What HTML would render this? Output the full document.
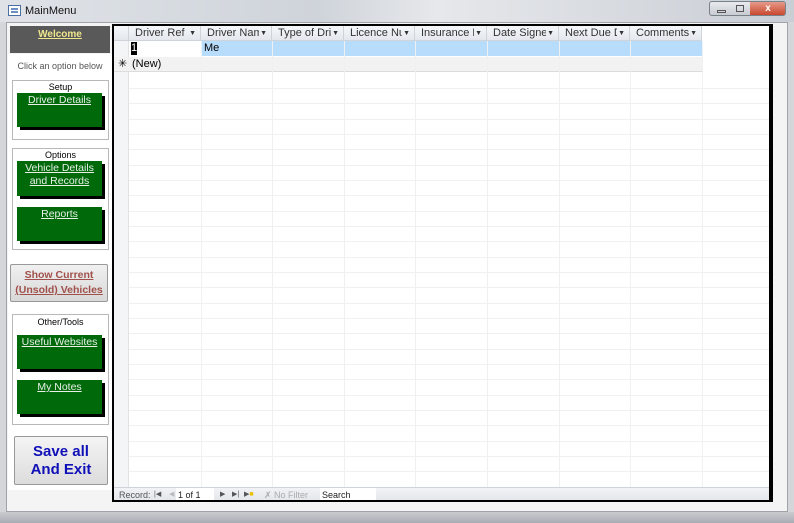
<!DOCTYPE html>
<html><head><style>
*{margin:0;padding:0;box-sizing:border-box}
body{width:794px;height:523px;overflow:hidden;background:#d4d6da;font-family:"Liberation Sans",sans-serif;font-size:11px;position:relative}
.abs{position:absolute}
.title{left:0;top:0;width:794px;height:22px;background:linear-gradient(90deg,#dfe3e8,#cfd4da 40%,#e6e8eb 55%,#c9ced5);}
.client{left:6px;top:22px;width:782px;height:490px;background:#f4f4f4;border:1px solid #a0a4aa}
.box{background:#fff;border:1px solid #b8b8b8}
.gbtn{background:#006a0a;color:#e8f0e8;text-decoration:underline;text-align:center;font-size:10.5px;box-shadow:3px 3px 0 #000;line-height:13px;padding-top:1px}
.grid{left:112px;top:24px;width:661px;height:478px;background:#fff;border:2px solid #000;border-right:4px solid #000;overflow:hidden}
.hdr{position:absolute;top:0;height:15px;background:linear-gradient(#f5f7fa,#e4e8ee);border-right:1px solid #cfd4da;border-bottom:1px solid #cfd4da;font-size:11px;color:#333;line-height:15px;white-space:nowrap;overflow:hidden}
.hdr i{position:absolute;left:6px;right:12px;top:0;overflow:hidden;font-style:normal}
.hdr span{position:absolute;right:4px;font-size:7px}
.vl{position:absolute;top:15px;width:1px;height:450px;background:#eef0f2}
.hl{position:absolute;left:15px;height:1px;width:645px;background:#eef0f2}
</style></head><body>
<div class="abs title"></div>
<div class="abs" style="left:8px;top:5px;width:13px;height:11px;border:1px solid #4a6fa5;background:#fff"><div style="margin:2px;height:5px;border-top:2px solid #6a8fc0;border-bottom:2px solid #6a8fc0"></div></div>
<div class="abs" style="left:25px;top:5px;font-size:11px;color:#111">MainMenu</div>
<div class="abs" style="left:709px;top:1px;width:77px;height:15px;border:1px solid #7a8088;border-radius:3px;background:linear-gradient(#e8eaee,#c8ccd2);overflow:hidden">
<div class="abs" style="left:40px;top:0;width:36px;height:15px;background:linear-gradient(#e69a8a,#c43b20);color:#fff;text-align:center;font-weight:bold;font-size:10px;line-height:14px">x</div>
<div class="abs" style="left:7px;top:8px;width:9px;height:3px;border:1px solid #555"></div>
<div class="abs" style="left:26px;top:3px;width:8px;height:7px;border:1px solid #555"></div>
</div>
<div class="abs client"></div>
<div class="abs" style="left:10px;top:26px;width:100px;height:27px;background:#595959;color:#f0e68c;font-weight:bold;text-align:center;text-decoration:underline;font-size:10px;padding-top:3px">Welcome</div>
<div class="abs" style="left:8px;top:54px;width:104px;height:436px;background:#fff"></div>
<div class="abs" style="left:10px;top:61px;width:100px;text-align:center;color:#555;font-size:9px">Click an option below</div>
<div class="abs box" style="left:12px;top:80px;width:97px;height:60px"></div>
<div class="abs" style="left:12px;top:82px;width:97px;text-align:center;font-size:9px">Setup</div>
<div class="abs gbtn" style="left:17px;top:93px;width:85px;height:34px">Driver Details</div>
<div class="abs box" style="left:12px;top:148px;width:97px;height:102px"></div>
<div class="abs" style="left:12px;top:150px;width:97px;text-align:center;font-size:9px">Options</div>
<div class="abs gbtn" style="left:17px;top:161px;width:85px;height:35px">Vehicle Details and Records</div>
<div class="abs gbtn" style="left:17px;top:207px;width:85px;height:34px">Reports</div>
<div class="abs" style="left:10px;top:264px;width:98px;height:38px;border:1px solid #999;border-radius:2px;background:linear-gradient(#f0f0f0,#d8d8d8);color:#a0504a;font-weight:bold;text-decoration:underline;text-align:center;font-size:10.5px;line-height:15px;padding-top:3px">Show Current<br>(Unsold) Vehicles</div>
<div class="abs box" style="left:12px;top:314px;width:97px;height:111px"></div>
<div class="abs" style="left:12px;top:317px;width:97px;text-align:center;font-size:9px">Other/Tools</div>
<div class="abs gbtn" style="left:17px;top:335px;width:85px;height:34px">Useful Websites</div>
<div class="abs gbtn" style="left:17px;top:380px;width:85px;height:34px">My Notes</div>
<div class="abs" style="left:14px;top:436px;width:94px;height:49px;border:1px solid #999;border-radius:2px;background:linear-gradient(#f4f4f4,#dcdcdc);color:#1010b8;font-weight:bold;text-align:center;font-size:15px;line-height:18px;padding-top:6px">Save all<br>And Exit</div>

<div class="abs grid">
<div class="hdr" style="left:0;width:15px;padding:0"></div>
<div class="hdr" style="left:15px;width:72px"><i>Driver Ref</i><span>▼</span></div>
<div class="hdr" style="left:87px;width:71px"><i>Driver Name</i><span>▼</span></div>
<div class="hdr" style="left:158px;width:72px"><i>Type of Driver</i><span>▼</span></div>
<div class="hdr" style="left:230px;width:71px"><i>Licence Number</i><span>▼</span></div>
<div class="hdr" style="left:301px;width:72px"><i>Insurance Pro</i><span>▼</span></div>
<div class="hdr" style="left:373px;width:72px"><i>Date Signed</i><span>▼</span></div>
<div class="hdr" style="left:445px;width:71px"><i>Next Due Date</i><span>▼</span></div>
<div class="hdr" style="left:516px;width:72px"><i>Comments</i><span>▼</span></div>
<div class="abs" style="left:0;top:15px;width:15px;height:450px;background:#f4f5f7;border-right:1px solid #e0e2e6"></div>
<div class="abs" style="left:15px;top:15px;width:573px;height:15px;background:#b8dcfc"></div>
<div class="abs" style="left:15px;top:15px;width:72px;height:15px;background:#fff"></div>
<div class="abs" style="left:0;top:31px;width:588px;height:15px;background:#f2f2f2;border-bottom:1px solid #dcdcdc"></div>
<div class="abs" style="left:17px;top:16px;width:6px;height:13px;background:#000;color:#fff;font-size:11px;line-height:13px">1</div>
<div class="abs" style="left:90px;top:16px;font-size:11px">Me</div>
<div class="abs" style="left:4px;top:31px;font-size:11px">✳</div>
<div class="abs" style="left:18px;top:32px;font-size:11px">(New)</div>
<div class="vl" style="left:87px"></div><div class="vl" style="left:158px"></div><div class="vl" style="left:230px"></div><div class="vl" style="left:301px"></div><div class="vl" style="left:373px"></div><div class="vl" style="left:445px"></div><div class="vl" style="left:516px"></div><div class="vl" style="left:588px"></div>
<div class="hl" style="top:62px"></div><div class="hl" style="top:77px"></div><div class="hl" style="top:93px"></div><div class="hl" style="top:108px"></div><div class="hl" style="top:123px"></div><div class="hl" style="top:139px"></div><div class="hl" style="top:154px"></div><div class="hl" style="top:169px"></div><div class="hl" style="top:185px"></div><div class="hl" style="top:200px"></div><div class="hl" style="top:215px"></div><div class="hl" style="top:231px"></div><div class="hl" style="top:246px"></div><div class="hl" style="top:261px"></div><div class="hl" style="top:277px"></div><div class="hl" style="top:292px"></div><div class="hl" style="top:307px"></div><div class="hl" style="top:323px"></div><div class="hl" style="top:338px"></div><div class="hl" style="top:353px"></div><div class="hl" style="top:369px"></div><div class="hl" style="top:384px"></div><div class="hl" style="top:399px"></div><div class="hl" style="top:415px"></div><div class="hl" style="top:430px"></div><div class="hl" style="top:445px"></div>
<div class="abs" style="left:0;top:461px;width:661px;height:15px;background:linear-gradient(#f2f3f5,#e2e5ea);border-top:1px solid #cfd4da;font-size:9px;color:#555;line-height:14px">
<span class="abs" style="left:5px">Record:</span>
<span class="abs" style="left:40px;font-size:7px">|◀</span>
<span class="abs" style="left:55px;font-size:7px;color:#bbb">◀</span>
<span class="abs" style="left:62px;width:38px;height:13px;background:#fff;color:#222;padding-left:2px">1 of 1</span>
<span class="abs" style="left:106px;font-size:7px">▶</span>
<span class="abs" style="left:118px;font-size:7px">▶|</span>
<span class="abs" style="left:130px;font-size:7px">▶<b style="color:#e8c000">■</b></span>
<span class="abs" style="left:150px;color:#aaa">✗ No Filter</span>
<span class="abs" style="left:206px;width:56px;height:13px;background:#fff;color:#222;padding-left:2px">Search</span>
</div>
</div>
<div class="abs" style="left:0;top:512px;width:794px;height:11px;background:linear-gradient(#c8cace,#a9adb3)"></div>
</body></html>
